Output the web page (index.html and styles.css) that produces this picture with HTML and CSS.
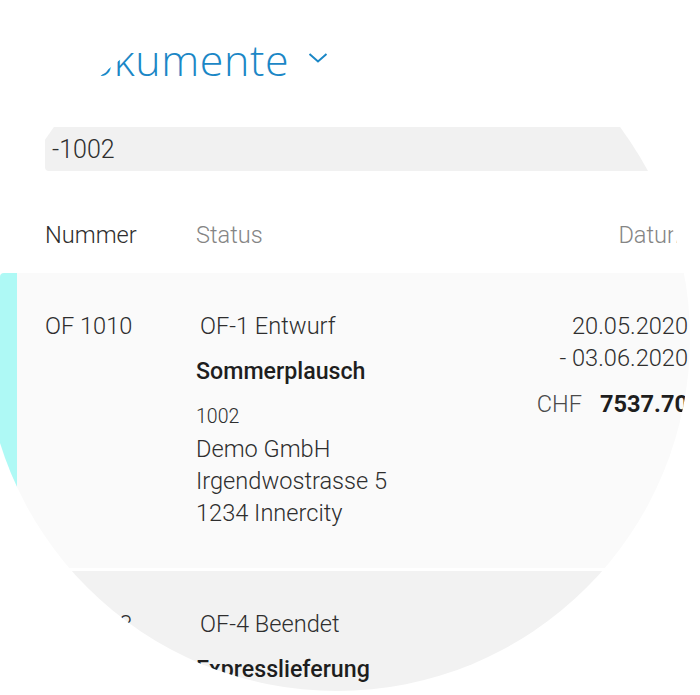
FILE: index.html
```html
<!DOCTYPE html>
<html lang="de">
<head>
<meta charset="utf-8">
<title>Dokumente</title>
<link rel="stylesheet" href="styles.css">
</head>
<body>
<div class="lens">
  <header class="top">
    <h1 class="title">Dokumente
      <svg class="chev" width="20" height="12" viewBox="0 0 20 12"><polyline points="1.5,2 10,9.5 18.5,2" fill="none" stroke="#1b87c6" stroke-width="2"/></svg>
    </h1>
  </header>
  <div class="search"><span>-1002</span></div>
  <div class="thead">
    <div class="th">Nummer</div>
    <div class="th muted">Status</div>
    <div class="th muted right">Datum</div>
  </div>
  <div class="row active">
    <div class="num">OF 1010</div>
    <div class="mid">
      <div class="status">OF-1 Entwurf</div>
      <div class="subject">Sommerplausch</div>
      <div class="cno">1002</div>
      <div class="addr">Demo GmbH</div>
      <div class="addr">Irgendwostrasse 5</div>
      <div class="addr">1234 Innercity</div>
    </div>
    <div class="side">
      <div class="date">20.05.2020</div>
      <div class="date">- 03.06.2020</div>
      <div class="amount"><span class="cur">CHF</span><span class="val">7537.70</span></div>
    </div>
  </div>
  <div class="row second">
    <div class="num">OF 1003</div>
    <div class="mid">
      <div class="status">OF-4 Beendet</div>
      <div class="subject">Expresslieferung</div>
    </div>
    <div class="side"></div>
  </div>
</div>
</body>
</html>
```
FILE: styles.css
```css
html, body {
  margin: 0;
  padding: 0;
  background: #fff;
}
body {
  width: 700px;
  height: 695px;
  overflow: hidden;
  font-family: Roboto, "Noto Sans", Arial, sans-serif;
  font-weight: 300;
  color: #2e2e2e;
}
.lens {
  width: 700px;
  height: 695px;
  overflow: hidden;
  background: #fff;
  clip-path: circle(353px at 337px 338px);
}
.top {
  padding: 29px 0 0 57px;
}
.title {
  margin: 0;
  display: flex;
  align-items: center;
  gap: 19px;
  height: 60px;
  font-family: "Open Sans", sans-serif;
  font-weight: 300;
  font-size: 43px;
  color: #1b87c6;
  letter-spacing: 0.6px;
}
.chev {
  margin-top: -2px;
}
.search {
  margin: 38px 0 0 45px;
  height: 44px;
  background: #f1f1f1;
  border-radius: 4px;
  display: flex;
  align-items: center;
  padding-left: 7px;
  font-size: 25px;
  color: #2e2e2e;
}
.thead, .row {
  display: grid;
  grid-template-columns: 151px 1fr auto;
  font-size: 23.6px;
  line-height: 32px;
}
.thead {
  margin-top: 48px;
  padding: 0 12px 0 45px;
}
.th { color: #2e2e2e; }
.th.muted { color: #858585; }
.right { text-align: right; }
.row {
  padding: 37px 12px 39px 45px;
  background: #f2f2f2;
}
.row.active {
  margin-top: 22px;
  background: #fafafa;
  border-left: 17px solid #aef9f5;
  border-radius: 4px 0 0 4px;
  padding-left: 28px;
}
.row.second {
  margin-top: 3px;
}
.status {
  padding-left: 4px;
}
.subject {
  margin-top: 13px;
  font-weight: 500;
  font-size: 23.2px;
  color: #1e1e1e;
}
.cno {
  margin-top: 14px;
  font-size: 19.5px;
}
.side {
  text-align: right;
}
.amount {
  margin-top: 14px;
  display: flex;
  justify-content: flex-end;
  gap: 18px;
}
.cur { color: #4a4a4a; }
.val {
  font-weight: 700;
  color: #1e1e1e;
}
```
